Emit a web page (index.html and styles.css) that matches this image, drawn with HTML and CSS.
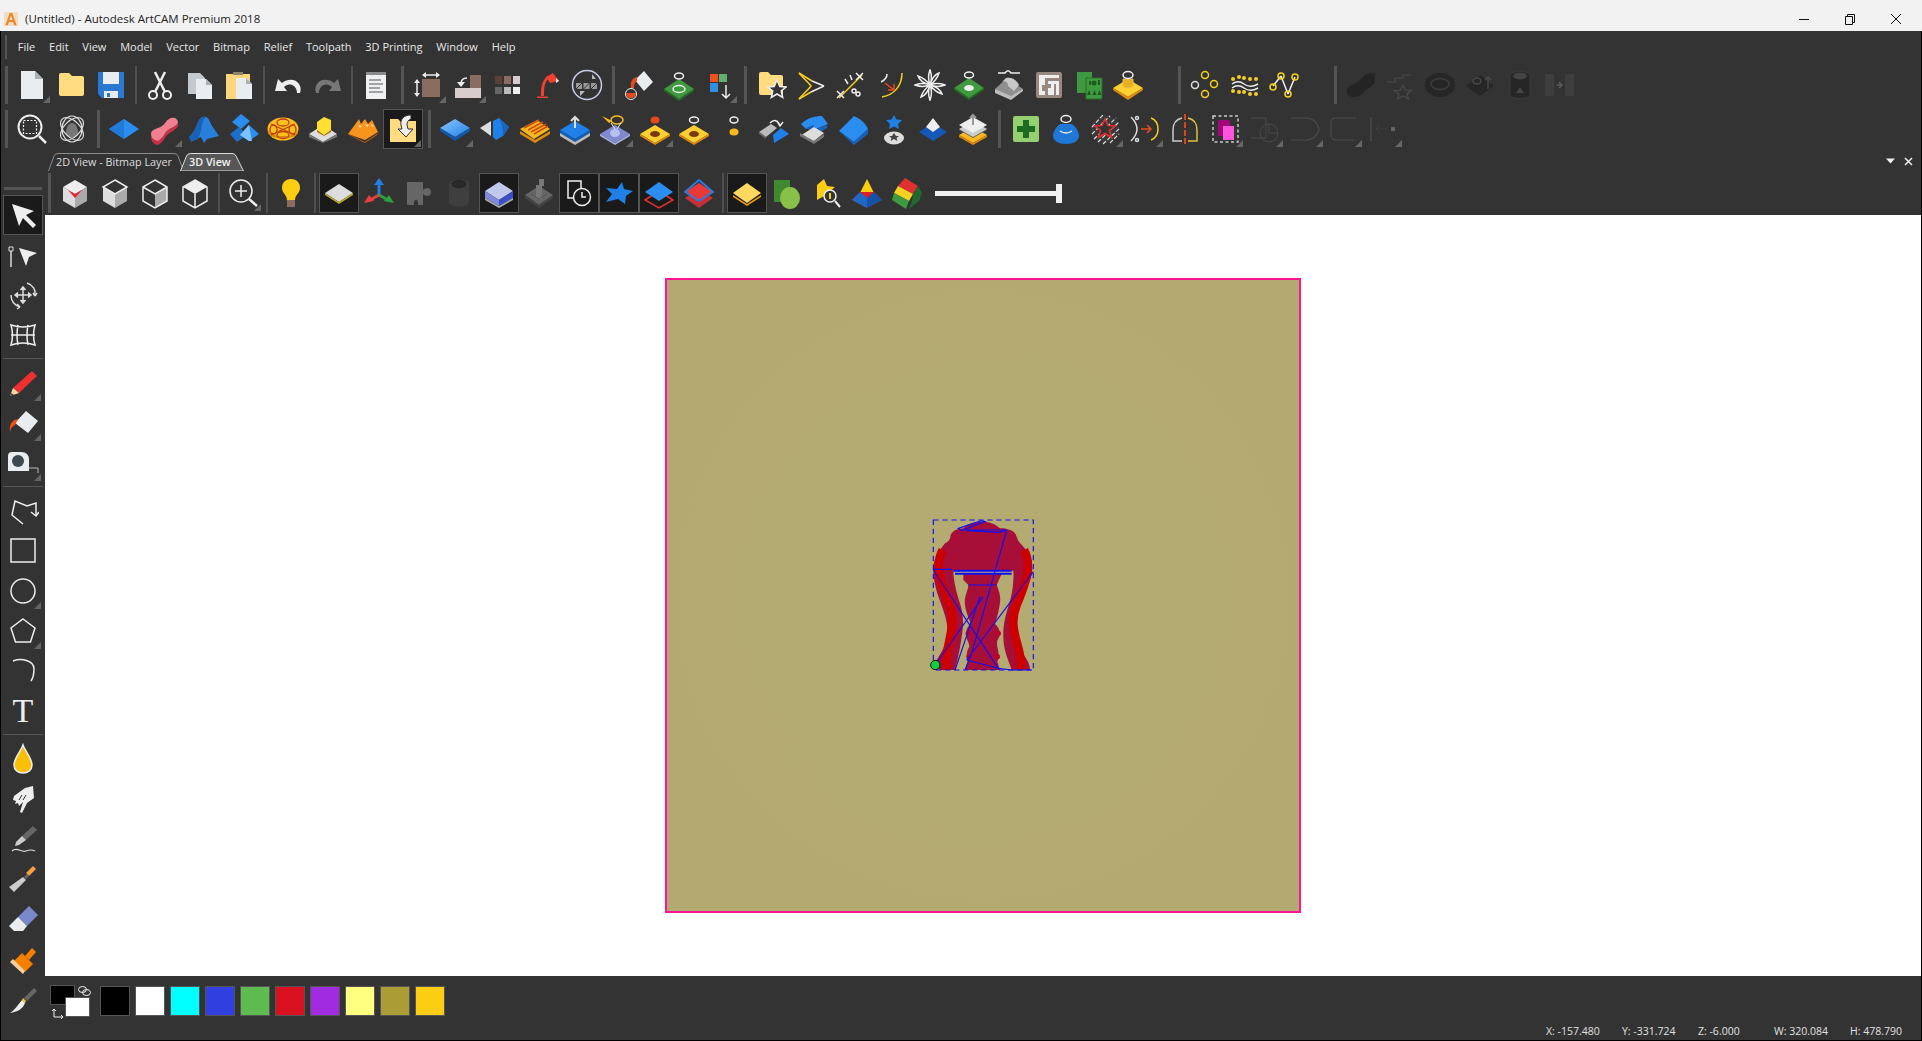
FILE: index.html
```html
<!DOCTYPE html>
<html lang="en">
<head>
<meta charset="utf-8">
<title>(Untitled) - Autodesk ArtCAM Premium 2018</title>
<link rel="stylesheet" href="styles.css">
</head>
<body>
<header class="titlebar">
  <svg class="logo" viewBox="0 0 16 16"><rect width="16" height="16" fill="#f6dcc4"/><path d="M1.5 15L6.5 1h3l5 14h-3l-1-3.5H5.5L4.500 15z" fill="#e8892a"/><path d="M6.200 9h3.600L8 4z" fill="#f6dcc4"/></svg>
  <span class="title">(Untitled) - Autodesk ArtCAM Premium 2018</span>
  <div class="winctl">
    <svg class="wc" viewBox="0 0 46 16"><path d="M18 8.500h10" stroke="#111" fill="none"/></svg>
    <svg class="wc" viewBox="0 0 46 16"><path d="M18.500 5.500h7v8h-7zM20.500 5.500v-2h7v8h-2" stroke="#111" fill="none"/></svg>
    <svg class="wc" viewBox="0 0 46 16"><path d="M18 3l10 10M28 3L18 13" stroke="#111" fill="none"/></svg>
  </div>
</header>
<div class="app">
  <div class="top">
    <nav class="menubar">
      <i class="grip"></i>
      <span>File</span><span>Edit</span><span>View</span><span>Model</span><span>Vector</span><span>Bitmap</span><span>Relief</span><span>Toolpath</span><span>3D Printing</span><span>Window</span><span>Help</span>
    </nav>
    <div class="row row1">
      <i class="sep first"></i>
      <span class="b m"><svg viewBox="0 0 32 32"><path d="M5 2h14l8 8v20H5z" fill="#e9edf0"/><path d="M19 2l8 8h-8z" fill="#aab2b8"/></svg></span>
      <span class="b"><svg viewBox="0 0 32 32"><path d="M3 6q0-2 2-2h8l3 3h10q2 0 2 2v16q0 2-2 2H5q-2 0-2-2z" fill="#ffdc80"/></svg></span>
      <span class="b"><svg viewBox="0 0 32 32"><path d="M3 3h26v26H7l-4-4z" fill="#2b78d0"/><path d="M8 3h16v12H8z" fill="#e9edf0"/><path d="M9 22h14v7H9z" fill="#e9edf0"/><path d="M12 24h3v4h-3z" fill="#2b78d0"/></svg></span>
      <i class="thin"></i>
      <span class="b"><svg viewBox="0 0 32 32" fill="none" stroke="#eee" stroke-width="2"><circle cx="9" cy="26" r="4"/><circle cx="23" cy="26" r="4"/><path d="M11 23L21 3M21 23L11 3" stroke-width="2.500"/></svg></span>
      <span class="b"><svg viewBox="0 0 32 32"><path d="M4 4h12l5 5v16H4z" fill="#c4c9cd"/><path d="M12 10h10l6 6v14H12z" fill="#e9edf0"/><path d="M22 10l6 6h-6z" fill="#aab2b8"/></svg></span>
      <span class="b"><svg viewBox="0 0 32 32"><path d="M3 5h24v25H3z" fill="#fbd67c"/><path d="M10 3h10v3H10z" fill="#8f826c"/><path d="M13 9h10l6 6v15H13z" fill="#e9edf0"/><path d="M23 9l6 6h-6z" fill="#aab2b8"/></svg></span>
      <i class="thin"></i>
      <span class="b"><svg viewBox="0 0 32 32"><path d="M3 22L6 10l4 4c6-5 14-4 17 1 2 3 2 6 1 9h-3c0-4-2-7-5-8-3-1-6 0-8 2l3 4z" fill="#eee"/></svg></span>
      <span class="b"><svg viewBox="0 0 32 32"><path d="M29 22L26 10l-4 4c-6-5-14-4-17 1-2 3-2 6-1 9h3c0-4 2-7 5-8 3-1 6 0 8 2l-3 4z" fill="#777"/></svg></span>
      <i class="thin"></i>
      <span class="b"><svg viewBox="0 0 32 32"><path d="M6 4h20v26H6z" fill="#eef0f2"/><path d="M6 3h20v3H6z" fill="#8a8a8a"/><path d="M9 11h12M9 15h14M9 19h11M9 23h14" stroke="#888" stroke-width="1.500"/></svg></span>
      <i class="sep"></i>
      <span class="b m"><svg viewBox="0 0 32 32"><path d="M9 10h18v18H9z" fill="#8a6d60"/><path d="M11 6h14M4 12v14" stroke="#eee" stroke-width="1.500"/><path d="M9 6l4-3v6zM27 6l-4-3v6zM4 10l-3 4h6zM4 28l-3-4h6z" fill="#eee"/></svg></span>
      <span class="b m"><svg viewBox="0 0 32 32"><path d="M3 19h26v10H3z" fill="#d8cccc"/><path d="M18 6h11v13H18z" fill="#8a6d60"/><path d="M15 9c-4 0-6 2-6 6" stroke="#eee" stroke-width="1.500" fill="none"/><path d="M5 13h8l-4 5z" fill="#eee"/></svg></span>
      <span class="b"><svg viewBox="0 0 32 32"><path d="M3 7h7v8H3z" fill="#5a4038"/><path d="M12 7h7v8h-7z" fill="#8a6d60"/><path d="M21 7h7v8h-7z" fill="#d8cccc"/><path d="M3 18h7v7H3z" fill="#666"/><path d="M12 18h7v7h-7z" fill="#bbb"/><path d="M21 18h7v7h-7z" fill="#eee"/></svg></span>
      <span class="b"><svg viewBox="0 0 32 32"><path d="M5 27.500h11v1.500H5zM9 27c0-8 0-13 6-20l2 1.500c-5 6-5 11-5 18.500z" fill="#f04030"/><path d="M14 8l7-4 6 8-9 2z" fill="#f04030"/><path d="M24 9l3 3-3 2z" fill="#eee"/></svg></span>
      <span class="b"><svg viewBox="0 0 32 32"><circle cx="16" cy="16" r="14.500" fill="none" stroke="#c8cde8" stroke-width="1.500"/><path d="M5 14h6v6H5zM12.500 14h6v6h-6zM20 14h6v6h-6z" fill="#999"/><path d="M5 20l6-6M12.500 20l6-6M20 20l6-6" stroke="#333"/><path d="M21 5l4 5h-4zM9 22h5l-5 5z" fill="#bbb"/></svg></span>
      <i class="sep"></i>
      <span class="b"><svg viewBox="0 0 32 32"><path d="M21 2l9 11-9 9-9-11z" fill="#e9edf0"/><path d="M14 8c-5 1-7 5-6 11h3c0-4 1-6 3-7z" fill="#e84a20"/><circle cx="8" cy="25" r="5.500" fill="none" stroke="#eee"/><path d="M3 24h10c0 3-2 5-5 5s-5-2-5-5z" fill="#e84a20"/></svg></span>
      <span class="b"><svg viewBox="0 0 32 32"><path d="M1 20l15-10 15 10-15 10z" fill="#3f9a3f"/><path d="M1 20l15 10 15-10v2L16 32 1 22z" fill="#256b25"/><ellipse cx="16" cy="20" rx="6" ry="3.500" fill="none" stroke="#eee" stroke-width="1.500"/><ellipse cx="16" cy="7" rx="4.500" ry="3" fill="none" stroke="#eee" stroke-width="1.500"/></svg></span>
      <span class="b m"><svg viewBox="0 0 32 32"><path d="M7 5h8v8H7z" fill="#f05020"/><path d="M16 5h8v8h-8z" fill="#60b070"/><path d="M7 14h8v9H7z" fill="#3090e0"/><path d="M23 16v13M19 25l4 4 4-4" stroke="#eee" stroke-width="1.500" fill="none"/></svg></span>
      <i class="sep"></i>
      <span class="b"><svg viewBox="0 0 32 32"><path d="M4 5q0-2 2-2h7l3 3h10q2 0 2 2v18H6q-2 0-2-2z" fill="#ffdc80"/><path d="M22 11l2.800 6.500 6.200.5-4.800 4 1.500 6.500-5.700-3.500-5.700 3.500 1.500-6.500-4.800-4 6.200-.5z" fill="#333" stroke="#eee" stroke-width="1.500"/></svg></span>
      <span class="b"><svg viewBox="0 0 32 32" fill="none" stroke-width="1.500"><path d="M17 12l12 5" stroke="#eee"/><path d="M29 17L16 23" stroke="#eee"/><path d="M4 4l13 8M16 23L4 30" stroke="#f5d020"/><path d="M4 4c6 7 10 10 12 13-2 3-6 6-12 13" stroke="#f5d020"/></svg></span>
      <span class="b"><svg viewBox="0 0 32 32" fill="none" stroke="#eee" stroke-width="1.500"><path d="M5 29L28 6" stroke="#f5d020"/><path d="M22 4l7 7M29 4l-7 7M3 22l7 7M10 22l-7 7M11 10l3 5M16 6l2 5"/><circle cx="20" cy="22" r="2"/><circle cx="24" cy="25" r="2"/></svg></span>
      <span class="b"><svg viewBox="0 0 32 32" fill="none" stroke-width="1.500"><path d="M28 4c0 13-8 22-20 24" stroke="#f5d020"/><path d="M13 5c0 3-2 6-6 8" stroke="#eee"/><path d="M11 14l9 7M20 15v6h-6" stroke="#e84a20"/></svg></span>
      <span class="b"><svg viewBox="0 0 32 32" fill="none" stroke="#eee" stroke-width="1.500"><path d="M16 16C13 8 15 4 16 1c1 3 3 7 0 15zM16 16c3 8 1 12 0 15-1-3-3-7 0-15zM16 16C8 13 4 15 1 16c3 1 7 3 15 0zM16 16c8 3 12 1 15 0-3-1-7-3-15 0zM16 16c-5-7-9-8-12-9 1 3 5 7 12 9zM16 16c5 7 9 8 12 9-1-3-5-7-12-9zM16 16c7-5 8-9 9-12-3 1-7 5-9 12zM16 16c-7 5-8 9-9 12 3-1 7-5 9-12z"/></svg></span>
      <span class="b"><svg viewBox="0 0 32 32"><path d="M1 19l15-10 15 10-15 10z" fill="#3f9a3f"/><path d="M1 19l15 10 15-10v2L16 31 1 21z" fill="#256b25"/><ellipse cx="16" cy="19" rx="5" ry="3" fill="#eee"/><ellipse cx="16" cy="6" rx="4.500" ry="3" fill="none" stroke="#eee" stroke-width="1.500"/></svg></span>
      <span class="b"><svg viewBox="0 0 32 32"><path d="M2 20l12-11 16 11-12 9z" fill="#8f8f8f"/><path d="M2 20v4l16 7v-4zM18 27v4l12-9v-2z" fill="#bdbdbd"/><path d="M9 13c3-2 6 0 6 4l6 5 5-6c-3-6-8-8-13-7z" fill="#c8c8c8"/><path d="M5 4h7c2-3 4-3 6 0h9" stroke="#eee" stroke-width="1.500" fill="none"/></svg></span>
      <span class="b"><svg viewBox="0 0 32 32"><rect x="3" y="3" width="26" height="26" rx="2" fill="#998880"/><path d="M6 6h20v3H12v7H9v6h3v4H6zM15 12h11v14h-3V15h-2v11h-6V19h3v-4h-3z" fill="#eee"/></svg></span>
      <span class="b"><svg viewBox="0 0 32 32"><path d="M4 3h15v21H4z" fill="#3f9a3f"/><path d="M13 9h16v21H13z" fill="#3f9a3f" stroke="#2a6a2a"/><circle cx="21" cy="14" r="2.500" fill="#1e5a1e"/><path d="M16 12h2v4h-2zM25 11h2v5h-2zM14 26l2-5 2 5zM19.500 26l2-5 2 5zM24.500 26l2-5 2 5z" fill="#1e5a1e"/></svg></span>
      <span class="b"><svg viewBox="0 0 32 32"><path d="M1 19l15-9 15 9-15 9z" fill="#fbd030"/><path d="M1 19l15 9 15-9v2L16 31 1 21z" fill="#e08a10"/><path d="M11 10h10v7q-5 4-10 0z" fill="#e8b020" stroke="#eebb50"/><ellipse cx="16" cy="6" rx="5" ry="3.500" fill="none" stroke="#eee" stroke-width="1.500"/></svg></span>
      <i class="sep wide"></i>
      <span class="b"><svg viewBox="0 0 32 32" fill="none" stroke="#f5d020" stroke-width="1.500"><circle cx="16" cy="6" r="3.500"/><circle cx="25" cy="15" r="3.500"/><circle cx="16" cy="25" r="3.500"/><circle cx="6" cy="16" r="3.500" stroke="#ddd"/></svg></span>
      <span class="b"><svg viewBox="0 0 32 32"><path d="M3 15c4-3 8-3 12 0s9 3 14 0M3 19c4-3 8-3 12 0s9 3 14 0" stroke="#eee" stroke-width="1.500" fill="none"/><g fill="#f5d020"><circle cx="4" cy="10" r="2"/><circle cx="10" cy="8" r="2"/><circle cx="15" cy="9" r="2"/><circle cx="21" cy="10" r="2"/><circle cx="27" cy="10" r="2"/><circle cx="4" cy="22" r="2"/><circle cx="10" cy="23" r="2"/><circle cx="15" cy="23" r="2"/><circle cx="21" cy="25" r="2"/><circle cx="27" cy="25" r="2"/></g></svg></span>
      <span class="b"><svg viewBox="0 0 32 32" fill="none" stroke-width="1.500"><path d="M5 17L13 7M13 7l7 18M20 25l7-17" stroke="#eee"/><g stroke="#f5d020"><circle cx="5" cy="18" r="3"/><circle cx="13" cy="7" r="3"/><circle cx="20" cy="25" r="3"/><circle cx="27" cy="8" r="3"/></g></svg></span>
      <i class="sep wide"></i>
      <span class="b"><svg viewBox="0 0 32 32"><path d="M2 20c3-4 10-5 15-11 3-4 9-6 13-4v8c-4 6-9 7-14 13-5 3-10 3-14-1z" fill="#242424"/></svg></span>
      <span class="b"><svg viewBox="0 0 32 32" fill="none" stroke="#4a4a4a" stroke-width="1.200"><path d="M2 13h8v-4h8V6h8"/><path d="M18 16l2.500 5 6 .5-4.500 3.500 1.500 5-5.500-3-5.500 3 1.500-5-4.500-3.500 6-.5z"/></svg></span>
      <span class="b"><svg viewBox="0 0 32 32"><ellipse cx="16" cy="16" rx="15" ry="12" fill="#262626"/><ellipse cx="16" cy="15" rx="9" ry="5.500" fill="none" stroke="#3d3d3d" stroke-width="1.500"/></svg></span>
      <span class="b"><svg viewBox="0 0 32 32"><path d="M2 17l14-11 14 11-14 10z" fill="#262626"/><ellipse cx="13" cy="12" rx="4" ry="3" fill="none" stroke="#4a4a4a" stroke-width="1.500"/><path d="M24 20V8M21 11l3-3 3 3" stroke="#4a4a4a" stroke-width="1.500" fill="none"/></svg></span>
      <span class="b"><svg viewBox="0 0 32 32"><path d="M6 7c0-6 20-6 20 0v18c0 6-20 6-20 0z" fill="#262626" stroke="#3a3a3a"/><ellipse cx="16" cy="7" rx="7" ry="3.500" fill="#444"/><path d="M12 24l4-6 4 6z" fill="#444"/></svg></span>
      <span class="b"><svg viewBox="0 0 32 32"><rect x="2" y="5" width="9" height="22" rx="1" fill="#3e3e3e"/><rect x="22" y="5" width="9" height="22" rx="1" fill="#3e3e3e"/><path d="M14 16h5M16 13l3 3-3 3" stroke="#5a5a5a" stroke-width="1.500" fill="none"/></svg></span>
    </div>
    <div class="row row2">
      <i class="sep first"></i>
      <span class="b"><svg viewBox="0 0 32 32" fill="none" stroke="#eee"><circle cx="14" cy="14" r="11.500" stroke-width="2"/><path d="M7.500 7.500h13v13h-13z" stroke-dasharray="2 1.500" stroke-width="1.200"/><path d="M23 23l7 7" stroke-width="2.500"/></svg></span>
      <span class="b"><svg viewBox="0 0 32 32"><path d="M16 10c4 0 6 5 6 10 0 3-3 5-6 5s-6-2-6-5c0-5 2-10 6-10z" fill="#777"/><g fill="none" stroke="#ddd" stroke-width="1.200"><ellipse cx="16" cy="16" rx="8" ry="14" transform="rotate(45 16 16)"/><ellipse cx="16" cy="16" rx="8" ry="14" transform="rotate(-45 16 16)"/><ellipse cx="16" cy="16" rx="10" ry="13"/></g></svg></span>
      <i class="sep"></i>
      <span class="b"><svg viewBox="0 0 32 32"><path d="M1 16L16 6l15 10-15 10z" fill="#2a8ef0"/><path d="M1 16l15 10V6z" fill="#1f7ad8"/></svg></span>
      <span class="b m"><svg viewBox="0 0 32 32"><path d="M3 21c0-5 7-5 11-8 4-3 4-6 9-8 4-1 7 1 7 5-2 4-8 5-11 8s-3 7-9 10c-4 0-7-3-7-7z" fill="#f08090"/><path d="M3 21c0 4 3 7 7 7 6-3 6-7 9-10s9-4 11-8v3c-2 4-8 6-11 9s-3 7-9 10c-4 0-7-4-7-8z" fill="#c83048"/></svg></span>
      <span class="b"><svg viewBox="0 0 32 32"><path d="M1 24C6 20 8 14 10 9c2-5 5-6 8-5 3 1 4 5 6 9l7 10-12 3-3 4-3-6-7 3z" fill="#2a7fdc"/><path d="M10 9c2-5 5-6 8-5-4 3-4 9-5 14l-3 8-7 3-2-5c5-4 7-10 9-15z" fill="#1a62b8"/></svg></span>
      <span class="b"><svg viewBox="0 0 32 32" fill="#2a8ef0"><path d="M13 1l9 7-9 8-9-7z"/><path d="M2 21l9-7 8 8-10 7z" fill="#1f6fc8"/><path d="M21 12l10 9-10 7-9-6z"/><path d="M21 12l3 16-3 0-9-6z" fill="#7cc0ff"/></svg></span>
      <span class="b"><svg viewBox="0 0 32 32"><ellipse cx="16" cy="16" rx="15.500" ry="11.500" fill="#f8c020"/><path d="M1 17c2 8 28 8 30 0v3c-3 7-27 7-30 0z" fill="#d88a10"/><g fill="none" stroke="#c23c10" stroke-width="1.300"><path d="M4 11l24 11M28 11L4 22"/><ellipse cx="16" cy="9.500" rx="6" ry="3.500"/><ellipse cx="16" cy="22" rx="6" ry="3.500"/><ellipse cx="6.500" cy="16.500" rx="3.500" ry="4.500"/><ellipse cx="25.500" cy="16.500" rx="3.500" ry="4.500"/></g></svg></span>
      <span class="b"><svg viewBox="0 0 32 32"><path d="M2 21l14-9 14 9-14 8z" fill="#ddd"/><path d="M2 21l14 8 14-8v3l-14 6-14-6z" fill="#777"/><path d="M10 9l7-5 7 3v10l-7 5-7-4z" fill="#fde030"/><path d="M10 17l7 5 7-5v2l-7 4-7-4z" fill="#a07010"/></svg></span>
      <span class="b"><svg viewBox="0 0 32 32"><path d="M1 21l6-8 5-7 2 5 4-5 3 5 4-4 6 12-13 8z" fill="#f7941d"/><path d="M1 21l17 8 13-9-1 2-12 8-16-8z" fill="#c86008"/><path d="M11 12l2 3 2-2zM18 11l2 3 2-2zM24 11l1 3 2-1z" fill="#ffe0a0"/></svg></span>
      <span class="b s m"><svg viewBox="0 0 32 32"><path d="M3 6h8l3 3h5v-1h10v21H3z" fill="#ffdc80"/><path d="M24 2c-7 0-11 4-10 10l1 4h-4l8 8 7-8h-5l-1-4c0-3 1-5 4-6z" fill="#eee" stroke="#333"/></svg></span>
      <i class="sep"></i>
      <span class="b m"><svg viewBox="0 0 32 32"><defs><linearGradient id="g1" x1="0" y1="0" x2="1" y2="1"><stop offset="0" stop-color="#8cc8ff"/><stop offset="1" stop-color="#1f80e8"/></linearGradient></defs><path d="M1 15l15-9 15 9-15 9z" fill="url(#g1)"/><path d="M1 15l15 9 15-9v3L16 28 1 18z" fill="#1458a8"/></svg></span>
      <span class="b"><svg viewBox="0 0 32 32"><path d="M1 15l11-7v15z" fill="#ddd"/><path d="M14 8l6-3 10 9-6 9-7 4-3-3z" fill="#1f80e8"/><path d="M20 5l10 9-6 9c0-7-1-12-4-18z" fill="#1a66bc"/></svg></span>
      <span class="b"><svg viewBox="0 0 32 32"><path d="M1 16l17-9 13 9-16 10z" fill="#f5b820"/><path d="M1 18l15 9 15-9v3L16 30 1 21z" fill="#e08a10"/><path d="M5 15l15-8M9 17l15-8M12 19l15-8M15 21l14-8" stroke="#d04a10" stroke-width="1.500"/></svg></span>
      <span class="b"><svg viewBox="0 0 32 32"><path d="M1 17l15-9 15 9-15 9z" fill="#1f80e8"/><path d="M1 17l15 9 15-9v3L16 29 1 20z" fill="#125fb8"/><path d="M1 20l15 9 15-9v3L16 32 1 23z" fill="#bbb"/><path d="M16 15V4M12 8l4-4 4 4" stroke="#ddd" stroke-width="2" fill="none"/></svg></span>
      <span class="b m"><svg viewBox="0 0 32 32"><path d="M1 21l15-9 15 9-15 9z" fill="#7f8ad0"/><path d="M1 21l15 9 15-9v2L16 32 1 23z" fill="#a8b0e0"/><ellipse cx="16" cy="20" rx="5" ry="4" fill="#b8c0f0"/><ellipse cx="18" cy="7" rx="6" ry="4" fill="none" stroke="#f5b820" stroke-width="1.500"/><path d="M3 3l10 5-3 2z" fill="#f5b820"/><path d="M12 10l4 6M22 10l-4 6" stroke="#eee"/></svg></span>
      <span class="b m"><svg viewBox="0 0 32 32"><path d="M1 21l15-9 15 9-15 9z" fill="#fbd030"/><path d="M1 21l15 9 15-9v2L16 32 1 23z" fill="#e08a10"/><ellipse cx="16" cy="21" rx="5" ry="3" fill="#7a3a10"/><ellipse cx="16" cy="7" rx="4.500" ry="3.500" fill="#e84a20"/></svg></span>
      <span class="b"><svg viewBox="0 0 32 32"><path d="M1 21l15-9 15 9-15 9z" fill="#fbd030"/><path d="M1 21l15 9 15-9v2L16 32 1 23z" fill="#e08a10"/><ellipse cx="16" cy="21" rx="5" ry="3" fill="#7a3a10"/><ellipse cx="16" cy="7" rx="4.500" ry="3" fill="none" stroke="#eee" stroke-width="1.500"/></svg></span>
      <span class="b"><svg viewBox="0 0 32 32"><ellipse cx="16" cy="7" rx="4" ry="3" fill="none" stroke="#eee" stroke-width="1.500"/><ellipse cx="16" cy="19" rx="4.500" ry="3.500" fill="#fbb820"/></svg></span>
      <span class="b"><svg viewBox="0 0 32 32"><path d="M15 22l8-7 8 6-15 9z" fill="#1f80e8"/><path d="M1 19l12-8 6 4-11 9z" fill="#bbb"/><path d="M1 19l7 5 0 2-7-5z" fill="#666"/><path d="M12 10c4-4 8-3 10 3M19 8l3 5 3-4" stroke="#eee" stroke-width="1.500" fill="none"/></svg></span>
      <span class="b"><svg viewBox="0 0 32 32"><path d="M3 11c6-6 14-8 21-8l6 8-12 5-3-3-7 3z" fill="#2a8ef0"/><path d="M8 15l7-3 3 4 11-4v3l-10 6z" fill="#1a62b8"/><path d="M2 23l14-9 10 6-10 8z" fill="#ddd"/><path d="M2 23l14 8 10-7v-3l-10 7-14-8z" fill="#777"/></svg></span>
      <span class="b"><svg viewBox="0 0 32 32"><path d="M1 18L16 3c7 3 11 7 14 13l-14 13z" fill="#2a8ef0"/><path d="M1 18l15 11 14-13v5L16 32z" fill="#1a62b8"/></svg></span>
      <span class="b"><svg viewBox="0 0 32 32"><path d="M16 2l2.500 4.500 5.500.5-4 4 1 5-5-2.500-5 2.500 1-5-4-4 5.500-.5z" fill="#1f80e8"/><ellipse cx="16" cy="25" rx="10" ry="6.500" fill="#ddd"/><path d="M16 20l2 3h3l-2.500 2 1 3-3.500-2-3.500 2 1-3L11 23h3z" fill="#444"/></svg></span>
      <span class="b"><svg viewBox="0 0 32 32"><path d="M2 19l14-9 14 9-14 9z" fill="#1458b8"/><path d="M9 14l7-9 7 9-7 5z" fill="#eee"/></svg></span>
      <span class="b"><svg viewBox="0 0 32 32"><path d="M2 22l14 8 14-8-14-8z" fill="#fbb820"/><path d="M2 22l14 8 14-8v2L16 32 2 24z" fill="#d88a10"/><path d="M2 17l14-8 14 8-14 8z" fill="#666"/><path d="M2 16l14 8 14-8-14-8z" fill="#ccc"/><path d="M2 12l14-8 14 8-14 8z" fill="#eee"/><path d="M16 12V2M13 5l3-3 3 3" stroke="#999" stroke-width="2" fill="none"/></svg></span>
      <i class="sep"></i>
      <span class="b"><svg viewBox="0 0 32 32"><rect x="3" y="3" width="26" height="26" rx="2" fill="#94d070"/><path d="M13 7h6v6h6v6h-6v6h-6v-6H7v-6h6z" fill="#1e6a20"/></svg></span>
      <span class="b"><svg viewBox="0 0 32 32"><path d="M10 11c-4 3-7 8-7 12 0 5 6 8 13 8s13-3 13-8c0-4-3-9-7-12z" fill="#1f78d8"/><path d="M10 18q6 4 12 0" stroke="#eee" stroke-width="1.500" fill="none"/><ellipse cx="16" cy="6" rx="5" ry="3.500" fill="none" stroke="#eee" stroke-width="1.500"/></svg></span>
      <span class="b m"><svg viewBox="0 0 32 32"><circle cx="16" cy="16" r="14" fill="#3a3a3a"/><path d="M3 14L14 2M3 21L21 3M5 26L27 5M9 29L30 9M14 31L31 15M21 30l9-9" stroke="#ddd" stroke-width="1.200" stroke-dasharray="4 2"/><path d="M16 6l3 6.500 7 .5-5.500 4.500 2 7-6.500-4-6.500 4 2-7L6 13l7-.5z" fill="#333" stroke="#e83030" stroke-width="1.500"/></svg></span>
      <span class="b m"><svg viewBox="0 0 32 32" fill="none" stroke-width="1.500"><path d="M2 4c4 4 6 8 6 12s-2 8-6 12" stroke="#ddd"/><circle cx="8" cy="5" r="1.500" stroke="#ddd"/><circle cx="8" cy="27" r="1.500" stroke="#ddd"/><path d="M22 5c5 2 7 6 7 11s-2 9-7 11" stroke="#f5d020"/><path d="M12 16h10M18 12l4 4-4 4" stroke="#e84a20"/></svg></span>
      <span class="b"><svg viewBox="0 0 32 32" fill="none" stroke-width="1.500"><path d="M16 1v30" stroke="#d8481c" stroke-width="2" stroke-dasharray="6 2"/><path d="M13 5q-9 2-9 12v11h9" stroke="#ccc"/><path d="M19 5q9 2 9 12v11h-9" stroke="#e0c040"/></svg></span>
      <span class="b m"><svg viewBox="0 0 32 32"><rect x="4" y="3" width="25" height="26" fill="none" stroke="#ccc" stroke-width="1.500" stroke-dasharray="3 2.500"/><path d="M9 7h12v16H9z" fill="#a0087a"/><path d="M14 13h11v14H14z" fill="#ff55dd"/></svg></span>
      <span class="b m"><svg viewBox="0 0 32 32" fill="none" stroke="#4a4a4a"><path d="M2 5h15v20H2"/><circle cx="20" cy="20" r="9"/><path d="M20 11v9h9"/></svg></span>
      <span class="b m"><svg viewBox="0 0 32 32" fill="none" stroke="#4a4a4a" stroke-width="1.200"><path d="M2 5h14c6 0 12 3 14 11-2 8-8 11-14 11H2"/></svg></span>
      <span class="b m"><svg viewBox="0 0 32 32" fill="none" stroke="#4a4a4a" stroke-width="1.200"><path d="M28 5H8Q3 5 3 10v12q0 5 5 5h20"/></svg></span>
      <span class="b m"><svg viewBox="0 0 32 32"><path d="M3 4v24" stroke="#555"/><path d="M19 16H8M12 12l-4 4 4 4" stroke="#3f3f3f" fill="none"/><path d="M23 14h4v4h-4z" fill="#666"/></svg></span>
    </div>
    <div class="tabrow">
      <div class="tabs">
        <div class="tab one"><svg class="tabshape" viewBox="0 0 136 18"><path d="M0.500 18L6 3Q7 0.500 10 0.500H126Q129 0.500 130 3L135.500 18" fill="none" stroke="#8c8c8c"/></svg><span>2D View - Bitmap Layer</span></div>
        <div class="tab two"><svg class="tabshape" viewBox="0 0 64 18"><path d="M0.500 18L6.500 3Q7.500 0.500 10.500 0.500H52Q55 0.500 56 3L63.500 18z" fill="#575757" stroke="#ddd"/></svg><span>3D View</span></div>
      </div>
      <div class="tabctl">
        <svg class="tc" viewBox="0 0 9 6"><path d="M0 0h9L4.500 5z" fill="#eee"/></svg>
        <svg class="tc" viewBox="0 0 9 9"><path d="M1 1l7 7M8 1L1 8" stroke="#eee" stroke-width="1.500"/></svg>
      </div>
    </div>
  </div>
  <div class="main">
    <aside class="tools">
      <i class="toolgrip"></i>
      <span class="b s"><svg viewBox="0 0 32 32"><path d="M5 5l22 7-8 4 10 10-3 3-10-10-4 8z" fill="#eee"/></svg></span>
      <span class="b"><svg viewBox="0 0 32 32"><path d="M4 12v16" stroke="#ddd" stroke-width="1.500"/><path d="M2 8h4v4H2z" fill="none" stroke="#ddd"/><path d="M12 9l18 5-8 4-3 9z" fill="#eee"/></svg></span>
      <span class="b"><svg viewBox="0 0 32 32" fill="none" stroke="#ddd" stroke-width="1.500"><path d="M16 9v14M9 16h14"/><path d="M13.500 11L16 8l2.500 3M13.500 21l2.500 3 2.500-3M11 13.500L8 16l3 2.500M21 13.500l3 2.500-3 2.500" fill="#ddd"/><path d="M20 4c6 2 9 7 8 12M4 16c0 6 3 10 9 12"/><path d="M28 17l-2-3M28 17l2-3M13 28l-3-3M13 28l-3 2"/></svg></span>
      <span class="b"><svg viewBox="0 0 32 32" fill="none" stroke="#eee" stroke-width="1.500"><path d="M4 6q12 4 24 0-3 10 0 20-12-4-24 0 3-10 0-20zM11 6q-2 10 0 20M21 6q-2 10 0 20M4 16h24"/></svg></span>
      <i class="divider"></i>
      <span class="b m"><svg viewBox="0 0 32 32"><path d="M25 4l5 5-18 17-6-5z" fill="#ee3030"/><path d="M6 21l6 5-9 3z" fill="#f0d8a0"/><path d="M4.500 26l2.500 2-4 1z" fill="#444"/></svg></span>
      <span class="b m"><svg viewBox="0 0 32 32"><path d="M19 4l12 10-10 12-13-10z" fill="#e9edf0"/><path d="M11 12C5 13 2 17 3 25c1-4 2-6 5-7z" fill="#f05010"/></svg></span>
      <span class="b m"><svg viewBox="0 0 32 32"><path d="M1 9q0-4 4-4h9q8 0 8 8v11H1z" fill="#e9edf0"/><circle cx="11" cy="14" r="6" fill="#3c4a50"/><path d="M22 21h9v5" stroke="#bbb" fill="none"/></svg></span>
      <i class="divider"></i>
      <span class="b"><svg viewBox="0 0 32 32" fill="none" stroke="#eee" stroke-width="1.500"><path d="M16 29L5 20 8 6l12 5 9-3v12"/><path d="M24 17l5 4 3-4"/></svg></span>
      <span class="b"><svg viewBox="0 0 32 32"><path d="M4 4h24v23H4z" fill="none" stroke="#eee" stroke-width="1.500"/></svg></span>
      <span class="b m"><svg viewBox="0 0 32 32"><circle cx="16" cy="16" r="12" fill="none" stroke="#eee" stroke-width="1.500"/></svg></span>
      <span class="b m"><svg viewBox="0 0 32 32"><path d="M16 4l12 9-4.500 14h-15L4 13z" fill="none" stroke="#eee" stroke-width="1.500"/></svg></span>
      <span class="b"><svg viewBox="0 0 32 32"><path d="M6 6c8-3 21-1 21 8 0 5-1 9-3 12" fill="none" stroke="#eee" stroke-width="1.500"/></svg></span>
      <span class="b t">T</span>
      <i class="divider"></i>
      <span class="b"><svg viewBox="0 0 32 32"><path d="M16 2c2 6 9 13 9 20 0 5-4 8-9 8s-9-3-9-8c0-7 7-14 9-20z" fill="#fbbf0a" stroke="#eee" stroke-width="1.500"/></svg></span>
      <span class="b"><svg viewBox="0 0 32 32"><path d="M7 13l11-8 8-2 1 12-7 5-5 10-2-1 3-10-4 4-1-3-3 1 1-3-3-1z" fill="#eee"/><path d="M15 12l-3 5M19 12l-3 5" stroke="#333"/></svg></span>
      <span class="b"><svg viewBox="0 0 32 32"><path d="M26 3l4 4-11 10-4-4z" fill="#666"/><path d="M15 13l4 4-7 5-4 1 1-4z" fill="#ccc"/><path d="M5 28c5-5 9 2 14 0s7-1 9 0" stroke="#ddd" stroke-width="1.200" fill="none"/></svg></span>
      <span class="b"><svg viewBox="0 0 32 32"><path d="M26 3l3 3-7 7-3-3z" fill="#f5a040"/><path d="M20 11l2 2-3 3-2-2z" fill="#666"/><path d="M16 14l3 3L7 29l-5-5z" fill="#ccc"/></svg></span>
      <span class="b"><svg viewBox="0 0 32 32"><path d="M22 3l9 9-11 11-9-9z" fill="#7a88cc"/><path d="M11 14l9 9-4 5H7l-5-5z" fill="#e9edf0"/></svg></span>
      <span class="b roller"><svg viewBox="0 0 32 32"><path d="M25 3l4 4-7 8-4-4z" fill="#f58000"/><path d="M15 8l11 11-8 8-11-11z" fill="#f58000"/><path d="M6 14l12 12-2 3L3 17z" fill="#f8d0a0"/></svg></span>
      <span class="b"><svg viewBox="0 0 32 32"><path d="M27 3l3 3-10 10-3-3z" fill="#666"/><path d="M16 13l3 3-1 2-3-3z" fill="#f5d020"/><path d="M15 15l3 3c-2 6-8 9-15 10 4-2 7-7 12-13z" fill="#eee"/></svg></span>
    </aside>
    <div class="work">
      <div class="viewbar">
        <i class="sep first"></i>
        <span class="b"><svg viewBox="0 0 32 32"><path d="M16 3l12 7-12 7-12-7z" fill="#eee"/><path d="M4 10l12 7v14L4 24z" fill="#ddd"/><path d="M28 10l-12 7v14l12-7z" fill="#aaa"/><path d="M9 13l7 4 7-4-7 8z" fill="#e82030"/></svg></span>
        <span class="b"><svg viewBox="0 0 32 32"><path d="M4 10l12 7v14L4 24z" fill="#ddd"/><path d="M28 10l-12 7v14l12-7z" fill="#aaa"/><path d="M16 3l12 7-12 7-12-7z" fill="#333" stroke="#eee" stroke-width="1.500"/></svg></span>
        <span class="b"><svg viewBox="0 0 32 32"><path d="M28 10l-12 7v14l12-7z" fill="#aaa"/><path d="M16 3l12 7v14l-12 7-12-7V10zM4 10l12 7 12-7" fill="none" stroke="#eee" stroke-width="1.500"/></svg></span>
        <span class="b"><svg viewBox="0 0 32 32"><path d="M16 3l12 7-12 7-12-7z" fill="#eee"/><path d="M16 3l12 7v14l-12 7-12-7V10zM16 17v14" fill="none" stroke="#eee" stroke-width="1.500"/></svg></span>
        <i class="thin"></i>
        <span class="b m"><svg viewBox="0 0 32 32" fill="none" stroke="#eee"><circle cx="14" cy="14" r="11" stroke-width="1.500"/><path d="M14 8v12M8 14h12" stroke-width="1.500"/><path d="M22 22l8 7" stroke-width="2.500"/></svg></span>
        <i class="thin"></i>
        <span class="b"><svg viewBox="0 0 32 32"><path d="M16 2c6 0 9 4 9 9 0 5-5 7-5 12h-8c0-5-5-7-5-12 0-5 3-9 9-9z" fill="#fbce14"/><path d="M12 23h8v7h-8z" fill="#8a6d60"/></svg></span>
        <i class="thin"></i>
        <span class="b s"><svg viewBox="0 0 32 32"><path d="M2 16l14-9 14 9-14 9z" fill="#ddd"/><path d="M2 16l14 9 14-9v2l-14 9-14-9z" fill="#b8a830"/></svg></span>
        <span class="b"><svg viewBox="0 0 32 32"><path d="M16 18V6" stroke="#1f80e8" stroke-width="3"/><path d="M16 1l5 7H11z" fill="#1f80e8"/><path d="M16 18L7 23" stroke="#e84040" stroke-width="3"/><path d="M1 26l5-8 5 6z" fill="#e84040"/><path d="M16 18l9 5" stroke="#30a040" stroke-width="3"/><path d="M31 26l-5-8-5 6z" fill="#30a040"/></svg></span>
        <span class="b"><svg viewBox="0 0 32 32"><path d="M4 5h16v8c3-3 8-3 8 2s-5 5-8 2v11h-5c1-7-5-7-4 0H4z" fill="#666"/></svg></span>
        <span class="b"><svg viewBox="0 0 32 32"><path d="M6 7c0-6 20-6 20 0v18c0 6-20 6-20 0z" fill="#3f3f3f"/><ellipse cx="16" cy="7" rx="7" ry="3.500" fill="#2a2a2a" stroke="#222"/></svg></span>
        <span class="b s"><svg viewBox="0 0 32 32"><path d="M2 14L16 5l14 9-14 9z" fill="#c0c8ec"/><path d="M2 14l14 9v6L2 21z" fill="#8088d8"/><path d="M30 14l-14 9v6l14-8z" fill="#3a50c8"/><path d="M2 21l14 8 14-8v2l-14 8-14-8z" fill="#aaa"/></svg></span>
        <span class="b"><svg viewBox="0 0 32 32"><path d="M2 18l14-9 14 9-14 10z" fill="#666"/><path d="M2 18l14 10 14-10v3L16 31 2 21z" fill="#444"/><path d="M13 8h6v14h-6zM16 2h5v7h-5z" fill="#777"/><path d="M8 17l8 5 8-5" stroke="#555" fill="none"/></svg></span>
        <span class="b s"><svg viewBox="0 0 32 32" fill="none" stroke="#eee" stroke-width="1.500"><path d="M5 4h13v17H5z"/><circle cx="19" cy="20" r="8.500" fill="#1a1a1a"/><path d="M19 15v5h4"/></svg></span>
        <span class="b s"><svg viewBox="0 0 32 32"><path d="M19 5l2 7 9 2-7 5-1 8-7-5-12 3 6-8-6-6 11 1z" fill="#1f80e8"/></svg></span>
        <span class="b s"><svg viewBox="0 0 32 32"><path d="M2 23l14-9 14 9-14 8z" fill="none" stroke="#e83030" stroke-width="1.500"/><path d="M2 15L16 5l14 10-14 9z" fill="#2a8ef0"/></svg></span>
        <span class="b"><svg viewBox="0 0 32 32"><path d="M2 21l14-9 14 9-14 10z" fill="#c83038"/><path d="M2 15L16 6l14 9-14 9z" fill="#e83838"/><path d="M2 15L16 3l14 12-14 9z" fill="none" stroke="#1f80e8" stroke-width="1.800"/></svg></span>
        <i class="thin"></i>
        <span class="b s"><svg viewBox="0 0 32 32"><path d="M2 18l14 9 14-9v2L16 29 2 20z" fill="#e89a10"/><path d="M2 16L16 6l14 10-14 10z" fill="#fdd860"/></svg></span>
        <span class="b"><svg viewBox="0 0 32 32"><path d="M3 3h16v22H3z" fill="#3f8a30"/><ellipse cx="19" cy="21" rx="10" ry="11" fill="#88c048"/></svg></span>
        <span class="b"><svg viewBox="0 0 32 32"><path d="M13 2l3 7 8 1-6 5 2 8-7-4-7 4V8z" fill="#fbce14"/><circle cx="19" cy="19" r="6" fill="#333" stroke="#eee" stroke-width="1.500"/><path d="M19 16v6" stroke="#fbce14" stroke-width="2"/><path d="M24 24l5 6" stroke="#eee" stroke-width="2"/></svg></span>
        <span class="b"><svg viewBox="0 0 32 32"><path d="M16 2l7 14H9z" fill="#fbce14"/><path d="M9 15h14l8 8-15 8-15-8z" fill="#d82020"/><path d="M1 23l15 8V21l-7-6z" fill="#1f68c8"/><path d="M31 23l-15 8V21l7-6z" fill="#1452a8"/></svg></span>
        <span class="b"><svg viewBox="0 0 32 32"><path d="M14 1l13 8-5 8-15-8z" fill="#e03030"/><path d="M7 9l15 8-4 7-15-8z" fill="#f5d020"/><path d="M3 16l15 8-3 8-14-9z" fill="#3f9a3f"/><path d="M27 9l4 7-3 8-10 8 3-8 1-7z" fill="#206a30"/></svg></span>
        <div class="slider"><i class="track"></i><i class="thumb"></i></div>
      </div>
      <div class="stage">
        <div class="board">
          <svg class="vase" viewBox="84 45 330 480">
            <path d="M245 65C265 65 285 70 300 85 320 85 345 90 350 110 355 130 375 140 385 160 398 180 400 210 392 235 375 270 350 290 340 330 330 370 325 400 345 430 365 460 390 480 390 510H335C325 480 310 450 310 410 308 370 322 330 332 295 338 270 342 240 340 212H160C160 240 170 280 180 310 190 345 192 370 185 410 180 450 170 490 165 510H120C115 505 108 500 105 490 120 460 140 440 142 400 145 360 125 320 112 280 105 255 100 235 100 205 100 175 120 150 135 130 145 125 150 120 152 105 160 88 175 88 190 85 205 70 225 65 245 65Z" fill="#a80f38"/>
            <path d="M128 150C100 200 128 260 150 320 172 390 128 450 142 508M372 150C400 200 372 260 350 315 318 390 372 450 362 508" fill="none" stroke="#cc0000" stroke-width="26"/>
            <path d="M190 222H305L290 255C298 275 305 295 298 320 294 345 288 360 285 372 295 380 303 395 298 410 292 420 290 425 292 440 298 460 296 475 292 485L300 510H195L203 485C198 470 200 450 208 440 208 425 195 415 198 395 202 380 210 375 210 365 200 340 190 310 196 290 200 275 205 265 205 255L190 240Z" fill="#a80f38"/>
            <g fill="#c0002a"><circle cx="207" cy="470" r="8"/><circle cx="292" cy="470" r="8"/><circle cx="205" cy="400" r="8"/><circle cx="295" cy="400" r="8"/></g>
            <g fill="none" stroke="#1010f0" stroke-width="3.500">
              <path d="M100 60H400V510H100Z" stroke-dasharray="16 11"/>
              <path d="M175 85L245 62 255 65 185 92zM195 90H320L300 97 200 92M100 208H155M205 255H290"/>
              <path d="M160 212H335M165 221H335" stroke-width="6"/>
              <path d="M100 210L295 505 200 480M320 90L215 460 195 510M105 495L250 290M400 215L200 480M295 505L335 510H395M240 290L165 510"/>
            </g>
            <circle cx="106" cy="495" r="14" fill="#10d040" stroke="#111" stroke-width="3"/>
          </svg>
        </div>
      </div>
      <footer class="palette">
        <div class="current">
          <i class="fg"></i><i class="bgc"></i>
          <svg class="link" viewBox="0 0 13 10" fill="none" stroke="#eee"><ellipse cx="4.500" cy="3.500" rx="4" ry="3"/><ellipse cx="8.500" cy="6.500" rx="4" ry="3"/></svg>
          <svg class="swap" viewBox="0 0 13 11" fill="none" stroke="#eee"><path d="M3 1v8h9M1 3l2-2 2 2M10 7l2 2-2 2"/></svg>
        </div>
        <i class="sw c1"></i><i class="sw c2"></i><i class="sw c3"></i><i class="sw c4"></i><i class="sw c5"></i><i class="sw c6"></i><i class="sw c7"></i><i class="sw c8"></i><i class="sw c9"></i><i class="sw c10"></i>
        <div class="status"><span>X: -157.480</span><span>Y: -331.724</span><span>Z: -6.000</span><span>W: 320.084</span><span>H: 478.790</span></div>
      </footer>
    </div>
  </div>
</div>
</body>
</html>
```

FILE: styles.css
```css
* { box-sizing: border-box; }
html, body { margin: 0; height: 100%; overflow: hidden; background: #333; }
body { width: 1922px; height: 1041px; font-family: "Open Sans", "Noto Sans", sans-serif; display: flex; flex-direction: column; }
i { display: block; font-style: normal; }

.titlebar { height: 31px; background: #f2f2f2; display: flex; align-items: center; padding-left: 4px; flex: none; padding-top: 7px; }
.logo { width: 14px; height: 14px; display: block; }
.title { font-size: 11.500px; color: #222; margin-left: 7px; line-height: 16px; }
.winctl { margin-left: auto; display: flex; padding-right: 3px; margin-top: -1px; }
.wc { width: 46px; height: 16px; display: block; }

.app { flex: 1; display: flex; flex-direction: column; border-left: 1px solid #000; border-right: 1px solid #000; border-bottom: 1px solid #000; min-height: 0; }
.top { flex: none; }

.menubar { height: 34px; display: flex; align-items: center; gap: 13.800px; font-size: 11px; color: #e8e8e8; padding: 0 0 3px 4px; }
.grip { width: 2px; height: 24px; background: #555; margin-right: -3px; }

.row { display: flex; align-items: center; height: 40px; margin-bottom: 4px; padding-left: 4px; }
.b { position: relative; width: 40px; height: 40px; flex: none; display: flex; align-items: center; justify-content: center; }
.row1 .b { width: 39.700px; }
.row2 .b { width: 39.850px; }
.b svg { width: 32px; height: 32px; display: block; flex: none; }
.b.s { background: #1a1a1a; outline: 1px solid #555; outline-offset: -1px; }
.b.m::after { content: ""; position: absolute; right: 2px; bottom: 2px; border-style: solid; border-width: 0 0 7px 7px; border-color: transparent transparent #666 transparent; }

.sep { width: 3px; height: 38px; background: #555; margin: 0 4.500px 0 5px; flex: none; }
.sep.first { margin: 0 4px 0 0; }
.sep.wide { margin-left: 30px; margin-right: 4px; }
.thin { width: 2px; height: 38px; background: #4f4f4f; margin: 0 3.500px; flex: none; }
.viewbar .thin { margin: 0 3px; }

.tabrow { height: 20px; display: flex; justify-content: space-between; align-items: flex-start; }
.tabs { display: flex; padding-left: 47px; }
.tab { position: relative; height: 18px; font-size: 10.800px; line-height: 18px; color: #ddd; }
.tab.one { width: 136px; padding-left: 8px; }
.tab.two { width: 64px; margin-left: -4px; padding-left: 9px; color: #f2f2f2; font-weight: 600; }
.tab span { position: relative; }
.tabshape { position: absolute; left: 0; top: 0; width: 100%; height: 18px; display: block; }
.tabctl { display: flex; align-items: center; gap: 9px; padding-right: 8px; padding-top: 4px; }
.tc { width: 9px; height: 9px; display: block; }

.main { flex: 1; display: flex; min-height: 0; }
.tools { width: 44px; flex: none; padding: 14px 0 0 2px; display: flex; flex-direction: column; }
.toolgrip { width: 38px; height: 3px; background: #555; margin: 0 0 5px 1px; flex: none; }
.divider { width: 40px; height: 1px; background: #555; margin: 3px 0 4px; flex: none; }
.t { font-family: "Liberation Serif", serif; font-size: 34px; color: #eee; line-height: 40px; }
.roller { margin-top: 2px; }

.work { flex: 1; display: flex; flex-direction: column; min-width: 0; }
.viewbar { height: 42px; flex: none; display: flex; align-items: flex-start; padding-left: 3px; }
.viewbar .sep, .viewbar .thin { height: 40px; }
.slider { display: flex; align-items: center; height: 40px; margin-left: 8px; }
.track { width: 121px; height: 5px; background: #f0f0f0; }
.thumb { width: 6px; height: 19px; background: #f0f0f0; }

.stage { flex: 1; background: #fff; display: flex; align-items: center; justify-content: center; min-height: 0; }
.board { position: relative; width: 636px; height: 635px; border: 2px solid #ff1496; background: radial-gradient(circle, #b4ab73 0 40%, #b3a971 70%); }
.vase { position: absolute; left: 261px; top: 235px; width: 110px; height: 160px; display: block; }

.palette { height: 64px; flex: none; display: flex; align-items: flex-start; padding: 10px 0 0 5px; position: relative; }
.current { position: relative; width: 40px; height: 34px; margin: -1px 10px 0 0; flex: none; }
.fg, .bgc { position: absolute; border: 1px solid #555; }
.fg { left: 0; top: 0; width: 25px; height: 20px; background: #000; }
.bgc { left: 15px; top: 12px; width: 25px; height: 20px; background: #fff; }
.link { position: absolute; left: 28px; top: 1px; width: 13px; height: 10px; display: block; }
.swap { position: absolute; left: 1px; top: 23px; width: 13px; height: 11px; display: block; }
.sw { width: 30px; height: 30px; border: 1px solid #555; margin-right: 5px; flex: none; }
.c1 { background: #000; } .c2 { background: #fff; } .c3 { background: #0ff; } .c4 { background: #3040e0; } .c5 { background: #5dbb50; }
.c6 { background: #d81020; } .c7 { background: #a02be0; } .c8 { background: #ffff80; } .c9 { background: #ab9c35; } .c10 { background: #fbce14; }
.status { margin-left: auto; width: 375px; display: grid; grid-template-columns: 76px 76px 76px 76px 71px; font-size: 10.500px; line-height: 14px; color: #e0e0e0; align-self: flex-end; padding-bottom: 2px; white-space: nowrap; }
```
